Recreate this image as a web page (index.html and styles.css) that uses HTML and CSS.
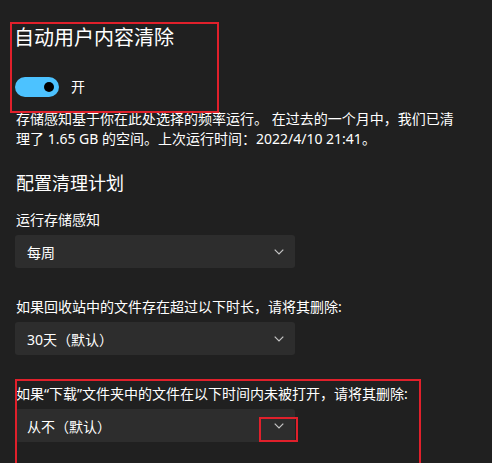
FILE: index.html
```html
<!DOCTYPE html>
<html lang="zh-CN">
<head>
  <meta charset="UTF-8">
  <meta name="viewport" content="width=device-width, initial-scale=1.0">
  <title>存储感知</title>
  <link rel="stylesheet" href="styles.css">
</head>
<body>
  <div class="page">
    <h1 class="title">自动用户内容清除</h1>
    <div class="toggle-row">
      <span class="toggle"><span class="knob"></span></span>
      <span class="toggle-text">开</span>
    </div>
    <p class="desc">存储感知基于你在此处选择的频率运行。 在过去的一个月中，我们已清<br>理了 1.65 GB 的空间。上次运行时间：2022/4/10 21:41。</p>

    <h2 class="subtitle">配置清理计划</h2>

    <div class="field">
      <div class="label">运行存储感知</div>
      <div class="dropdown">
        <span>每周</span>
        <svg class="chevron" width="10" height="6" viewBox="0 0 10 6"><polyline points="0.7,0.7 5,5 9.3,0.7" /></svg>
      </div>
    </div>

    <div class="field">
      <div class="label">如果回收站中的文件存在超过以下时长，请将其删除:</div>
      <div class="dropdown">
        <span>30天（默认）</span>
        <svg class="chevron" width="10" height="6" viewBox="0 0 10 6"><polyline points="0.7,0.7 5,5 9.3,0.7" /></svg>
      </div>
    </div>

    <div class="field">
      <div class="label">如果“下载”文件夹中的文件在以下时间内未被打开，请将其删除:</div>
      <div class="dropdown">
        <span>从不（默认）</span>
        <svg class="chevron" width="10" height="6" viewBox="0 0 10 6"><polyline points="0.7,0.7 5,5 9.3,0.7" /></svg>
      </div>
    </div>
  </div>

  <!-- annotation boxes -->
  <div class="mark mark-top"></div>
  <div class="mark mark-download"></div>
  <div class="mark mark-chevron"></div>
</body>
</html>
```

FILE: styles.css
```css
body {
  margin: 0;
  background-color: #202020;
  color: #ffffff;
  font-family: "Noto Sans", "Noto Sans CJK SC", sans-serif;
  overflow: hidden;
}
.page {
  position: relative;
  padding: 24px 0 0 15px;
  height: 439px;
}
.title {
  margin: 0 0 25px -1px;
  font-size: 20px;
  line-height: 28px;
  font-weight: normal;
}
.toggle-row {
  display: flex;
  align-items: center;
  gap: 12px;
  height: 20px;
}
.toggle {
  display: flex;
  align-items: center;
  justify-content: flex-end;
  width: 44px;
  height: 20px;
  padding-right: 5px;
  box-sizing: border-box;
  border-radius: 10px;
  background-color: #4cc2ff;
}
.knob {
  width: 10px;
  height: 10px;
  border-radius: 50%;
  background-color: #000000;
}
.toggle-text {
  font-size: 14px;
  line-height: 20px;
}
.desc {
  margin: 12px 0 0 1px;
  width: 470px;
  font-size: 14px;
  line-height: 20px;
  white-space: nowrap;
}
.subtitle {
  margin: 21px 0 14px 1px;
  font-size: 18px;
  line-height: 26px;
  font-weight: normal;
}
.field {
  margin-bottom: 29px;
}
.label {
  margin: 0 0 5px 1px;
  font-size: 14px;
  line-height: 20px;
  white-space: nowrap;
}
.dropdown {
  display: flex;
  align-items: center;
  justify-content: space-between;
  width: 280px;
  height: 33px;
  padding: 0 11px 0 12px;
  box-sizing: border-box;
  border-radius: 3px;
  background-color: #2d2d2d;
  font-size: 14px;
}
.chevron polyline {
  fill: none;
  stroke: #c5c5c5;
  stroke-width: 1.2;
}
.mark {
  position: absolute;
  border: 2px solid #e0202b;
  box-sizing: border-box;
}
.mark-top {
  left: 10px;
  top: 22px;
  width: 209px;
  height: 91px;
}
.mark-download {
  left: 15px;
  top: 379px;
  width: 406px;
  height: 100px;
}
.mark-chevron {
  left: 259px;
  top: 417px;
  width: 39px;
  height: 25px;
}
```
